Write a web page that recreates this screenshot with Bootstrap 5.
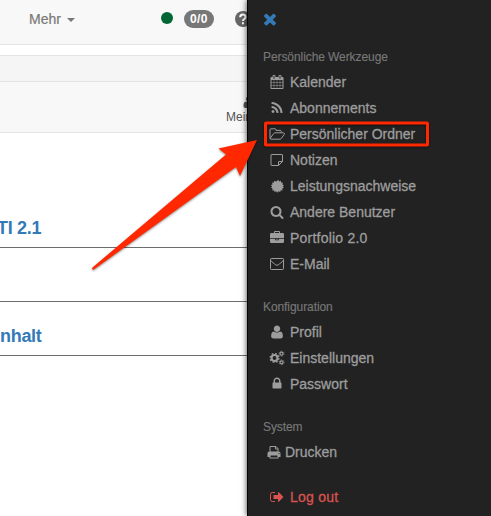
<!DOCTYPE html>
<html lang="de">
<head>
<meta charset="utf-8">
<meta name="viewport" content="width=device-width, initial-scale=1">
<title>Persönliche Werkzeuge</title>
<link href="https://cdn.jsdelivr.net/npm/bootstrap@5.3.0/dist/css/bootstrap.min.css" rel="stylesheet">
<style>
body{font:14px/20px "Liberation Sans",Arial,sans-serif;height:516px;color:#777}
.page-area{width:247px;height:516px}
.topnav{height:45px;background:#f8f8f8;border-bottom:1px solid #e4e4e4;padding-left:29px;padding-bottom:6px}
.topnav span{-webkit-text-stroke:.2px}
.caret-down{width:8px;border:4px solid transparent;border-top-color:#777;border-bottom:0;margin-left:6px;margin-top:2px}
.status-dot{width:12px;height:12px;background:#063;margin-left:86px;margin-top:-2px}
.counter{width:30px;height:18px;background:#777;font-size:12px;line-height:18px;margin-left:11px;letter-spacing:.4px}
.help{width:16px;height:16px;margin-left:21px}
.crumbs{height:27px;margin-top:10px;background:#f5f5f5;border:solid #e4e4e4;border-width:1px 0}
.toolbar{height:51px;background:#f8f8f8;border-bottom:1px solid #e4e4e4;padding:13px 0 0 226px;font-size:12px;color:#555}
.toolbar svg{width:14px;height:14px;margin-left:16px}
.toolbar span{line-height:17px}
.section-head{height:54px;border-bottom:1px solid #6d6d6d;color:#337ab7;font-size:18px;font-weight:700;line-height:20px;padding-bottom:9px}
.section-first{height:115px}
.section-head span{letter-spacing:-.3px}
.section-first span{margin-left:-3px}
.side-menu{width:244px;height:516px;background:#222;border-left:1px solid #050505;box-shadow:0 0 6px rgba(0,0,0,.75);padding:10px 0 0 15px;color:#9d9d9d}
.side-menu h2{font-size:12px;line-height:20px;color:#777;margin:20px 0 2px;letter-spacing:-.08px;-webkit-text-stroke:.15px}
.side-menu .first-title{margin-top:19px}
.side-menu li{height:26px}
.side-menu li span{margin-left:5px;-webkit-text-stroke:.3px}
.side-menu li svg{width:16px;height:16px;margin-left:6px;overflow:visible}
.side-menu .print svg{margin-left:3px}
.side-menu .print span{margin-left:3px}
.side-menu .wide span{letter-spacing:.22px}
.logout{color:#d9534f}
.exit-list{margin-top:19px}
.close-x{width:18px;height:18px;color:#337ab7;display:block;margin-left:-2px}
.annotation{left:0;top:0;width:491px;height:516px;pointer-events:none;filter:drop-shadow(0 1px 1px rgba(0,0,0,.45))}
</style>
<script src="https://cdn.jsdelivr.net/npm/bootstrap@5.3.0/dist/js/bootstrap.bundle.min.js"></script>
</head>
<body class="d-flex overflow-hidden position-relative bg-white">
<main class="page-area flex-shrink-0 overflow-hidden">
<nav class="topnav d-flex align-items-center"><span>Mehr</span><i class="caret-down"></i><i class="status-dot rounded-circle flex-shrink-0"></i><b class="counter rounded-pill text-white text-center flex-shrink-0">0/0</b>
<svg class="help flex-shrink-0" viewBox="0 0 16 16"><circle cx="8" cy="8" r="8" fill="#666"/><path d="M5.2 6.2C5.3 2.7 10.6 2.7 10.6 6c0 2-2.6 2-2.6 4M8 11.2v2" fill="none" stroke="#fff" stroke-width="2.1"/></svg></nav>
<div class="crumbs"></div>
<div class="toolbar d-flex flex-column"><svg viewBox="0 0 1792 1792" fill="#555"><use href="#user"/></svg><span>Mein</span></div>
<section class="section-head section-first d-flex align-items-end"><span>TI 2.1</span></section>
<section class="section-head"></section>
<section class="section-head d-flex align-items-end"><span>nhalt</span></section>
</main>
<aside class="side-menu flex-shrink-0">
<svg class="close-x" viewBox="0 0 1792 1792" fill="currentColor"><path d="M1490 1322q0 40-28 68l-136 136q-28 28-68 28t-68-28l-294-294-294 294q-28 28-68 28t-68-28l-136-136q-28-28-28-68t28-68l294-294-294-294q-28-28-28-68t28-68l136-136q28-28 68-28t68 28l294 294 294-294q28-28 68-28t68 28l136 136q28 28 28 68t-28 68l-294 294 294 294q28 28 28 68z"/></svg>
<h2 class="first-title fw-normal">Persönliche Werkzeuge</h2>
<ul class="list-unstyled mb-0">
<li class="d-flex align-items-center"><svg viewBox="-128 -128 2048 2048" fill="currentColor"><path d="M192 1664h288v-288h-288v288zm352 0h320v-288h-320v288zm-352-352h288v-320h-288v320zm352 0h320v-320h-320v320zm-352-384h288v-288h-288v288zm736 736h320v-288h-320v288zm-384-736h320v-288h-320v288zm768 736h288v-288h-288v288zm-384-352h320v-320h-320v320zm-352-864v-288q0-13-9.5-22.5t-22.5-9.5h-64q-13 0-22.5 9.5t-9.5 22.5v288q0 13 9.5 22.5t22.5 9.5h64q13 0 22.5-9.5t9.5-22.5zm736 864h288v-320h-288v320zm-384-384h320v-288h-320v288zm384 0h288v-288h-288v288zm32-480v-288q0-13-9.5-22.5t-22.5-9.5h-64q-13 0-22.5 9.5t-9.5 22.5v288q0 13 9.5 22.5t22.5 9.5h64q13 0 22.5-9.5t9.5-22.5zm384-64v1280q0 52-38 90t-90 38h-1408q-52 0-90-38t-38-90v-1280q0-52 38-90t90-38h128v-96q0-66 47-113t113-47h64q66 0 113 47t47 113v96h384v-96q0-66 47-113t113-47h64q66 0 113 47t47 113v96h128q52 0 90 38t38 90z"/></svg><span>Kalender</span></li>
<li class="d-flex align-items-center"><svg viewBox="-128 -128 2048 2048" fill="currentColor"><path d="M576 1344q0 80-56 136t-136 56-136-56-56-136 56-136 136-56 136 56 56 136zm512 123q2 28-17 48-18 21-47 21h-135q-25 0-43-16.5t-20-41.5q-22-229-184.5-391.5t-391.5-184.5q-25-2-41.5-20t-16.5-43v-135q0-29 21-47 17-17 43-17h5q160 13 306 80.5t259 181.5q114 113 181.5 259t80.5 306zm512 2q2 27-18 47-18 20-46 20h-143q-26 0-44.5-17.5t-19.5-42.5q-12-215-101-408.5t-231.5-336-336-231.5-408.5-102q-25-1-42.5-19.5t-17.5-43.5v-143q0-28 20-46 18-18 44-18h3q262 13 501.5 120t425.5 294q187 186 294 425.5t120 501.5z"/></svg><span>Abonnements</span></li>
<li class="d-flex align-items-center"><svg viewBox="0 0 16 16" fill="none" stroke="currentColor" stroke-linejoin="round"><path d="M12.2 6.5V5.400q0-1-1-1H7V3.800q0-1-1-1H2q-1 0-1 1v8.400q0 1 1 1h8.900q.7 0 1.200-.5l3-4.100q1-1.600-.6-1.800H6q-.8 0-1.300.7l-3.500 4.800"/></svg><span>Persönlicher Ordner</span></li>
<li class="d-flex align-items-center"><svg viewBox="0 0 16 16" fill="none" stroke="currentColor"><path d="M2.500 2.500h10.500q.5 0 .5.500v6.500l-4 4H2.500Q2 13.500 2 13V3q0-.5.5-.5zM13.500 9.500H10q-.5 0-.5.500v3.500"/></svg><span>Notizen</span></li>
<li class="d-flex align-items-center"><svg viewBox="0 0 16 16" fill="currentColor"><path d="M8 3l1.300-1.200.9 1.600 1.700-.6.2 1.800 1.800.1-.5 1.800 1.600.8L13.800 8.600l1.100 1.400-1.700.6.3 1.800-1.800-.1-.5 1.700-1.700-.7L8.300 14.700l-1-1.500-1.600.8-.6-1.700-1.900.1.400-1.900-1.600-.7 1.100-1.400L1.800 7.100l1.700-.7-.4-1.900 1.800.1.400-1.800 1.700.7z"/></svg><span>Leistungsnachweise</span></li>
<li class="d-flex align-items-center"><svg viewBox="-128 -128 2048 2048" fill="currentColor"><path d="M1216 832q0-185-131.500-316.500t-316.500-131.500-316.500 131.500-131.500 316.500 131.500 316.500 316.500 131.500 316.500-131.500 131.500-316.500zm512 832q0 52-38 90t-90 38q-54 0-90-38l-343-342q-179 124-399 124-143 0-273.500-55.500t-225-150-150-225-55.500-273.500 55.500-273.500 150-225 225-150 273.500-55.500 273.500 55.500 225 150 150 225 55.500 273.500q0 220-124 399l343 343q37 37 37 90z"/></svg><span>Andere Benutzer</span></li>
<li class="d-flex align-items-center wide"><svg viewBox="0 0 16 16" fill="currentColor"><path fill-rule="evenodd" d="M5 3V2q0-1 1-1h4q1 0 1 1v1h2.700Q15 3 15 4.300V8H1V4.300Q1 3 2.300 3zm1 0h4V2H6zM1 8.800h5.200v1.500h3.600V8.800H15v3q0 1.200-1.300 1.200H2.300Q1 13 1 11.800zM7 8.800h2v.8H7z"/></svg><span>Portfolio 2.0</span></li>
<li class="d-flex align-items-center"><svg viewBox="0 0 16 16" fill="none" stroke="currentColor"><rect x="1.500" y="2.500" width="13" height="11" rx=".8"/><path d="M1.700 4.200C2.500 6 5.800 8 6.700 8.800Q8 9.800 9.300 8.800C10.200 8 13.500 6 14.300 4.200"/></svg><span>E-Mail</span></li>
</ul>
<h2 class="fw-normal">Konfiguration</h2>
<ul class="list-unstyled mb-0">
<li class="d-flex align-items-center"><svg viewBox="-64 -64 1920 1920" fill="currentColor"><path id="user" d="M1600 1405q0 120-73 189.500t-194 69.500h-874q-121 0-194-69.500t-73-189.500q0-53 3.500-103.500t14-109 26.500-108.500 43-97.500 62-81 85.500-53.500 111.500-20q9 0 42 21.500t74.500 48 108 48 133.500 21.500 133.500-21.500 108-48 74.500-48 42-21.500q61 0 111.500 20t85.500 53.500 62 81 43 97.500 26.500 108.500 14 109 3.500 103.500zm-320-893q0 159-112.500 271.500t-271.500 112.500-271.500-112.500-112.500-271.500 112.500-271.500 271.500-112.500 271.500 112.500 112.500 271.500z"/></svg><span>Profil</span></li>
<li class="d-flex align-items-center"><svg viewBox="0 0 16 16" fill="none" stroke="currentColor"><circle cx="5.500" cy="8" r="2.900" stroke-width="2"/><circle cx="5.500" cy="8" r="4.400" stroke-width="1.300" stroke-dasharray="1.730 1.730"/><circle cx="12.500" cy="3.700" r="1.500" stroke-width="1.200"/><circle cx="12.500" cy="3.700" r="2.500" stroke-width=".8" stroke-dasharray="1.300 1.318"/><circle cx="12.500" cy="12.300" r="1.500" stroke-width="1.200"/><circle cx="12.500" cy="12.300" r="2.500" stroke-width=".8" stroke-dasharray="1.300 1.318"/></svg><span>Einstellungen</span></li>
<li class="d-flex align-items-center"><svg viewBox="-128 -64 2048 2048" fill="currentColor"><path d="M640 768h512v-192q0-106-75-181t-181-75-181 75-75 181v192zm832 96v576q0 40-28 68t-68 28h-960q-40 0-68-28t-28-68v-576q0-40 28-68t68-28h32v-192q0-184 132-316t316-132 316 132 132 316v192h32q40 0 68 28t28 68z"/></svg><span>Passwort</span></li>
</ul>
<h2 class="fw-normal">System</h2>
<ul class="list-unstyled mb-0">
<li class="d-flex align-items-center print"><svg viewBox="0 0 16 16" fill="currentColor"><path d="M4 8V2.500h6l2 2V8M9.500 2.500V5H12" fill="none" stroke="currentColor"/><path fill-rule="evenodd" d="M1.500 13V9.500Q1.500 7.500 3.300 7.500h9.400q1.800 0 1.800 2V13h-2v1.500h-9V13zm3-1.500v2h7v-2zM12.500 9v1h1V9z"/></svg><span>Drucken</span></li>
</ul>
<ul class="list-unstyled mb-0 exit-list">
<li class="d-flex align-items-center logout wide"><svg viewBox="0 0 16 16" fill="currentColor"><path d="M6 3.500H3.500q-2 0-2 2v5q0 2 2 2H6" fill="none" stroke="currentColor"/><path d="M5 6h4V3.500q0-.8.8-.3l4.200 4.300q.5.500 0 1l-4.200 4.300q-.8.400-.8-.3V10H5q-.5 0-.5-.5v-3Q4.500 6 5 6z"/></svg><span>Log out</span></li>
</ul>
</aside>
<svg class="annotation position-absolute" viewBox="0 0 491 516"><path d="M257 140L218.500 148.500L226 154.500L92.500 267.500Q91.500 269.500 93.500 269.700L236 167L240 176Z" fill="#ff2800"/><rect x="265.500" y="123" width="162" height="22" rx=".5" fill="none" stroke="#ff2800" stroke-width="3"/></svg>
</body>
</html>
